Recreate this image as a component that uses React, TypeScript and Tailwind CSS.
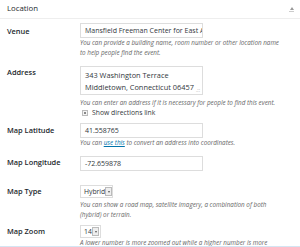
import React from "react";

const Help = ({ children, className = "" }: { children: React.ReactNode; className?: string }) => (
  <p className={`text-[6.3px] leading-[10px] italic text-[#666] whitespace-nowrap ${className}`}>{children}</p>
);

const Label = ({ children, pt }: { children: React.ReactNode; pt: string }) => (
  <div className={`w-[80px] shrink-0 pl-[7px] text-[7.4px] font-semibold text-[#23282d] leading-[10px] ${pt}`}>{children}</div>
);

const Select = ({ value, width }: { value: string; width: string }) => (
  <div className={`flex items-center h-[13px] border border-[#ddd] bg-white ${width}`}>
    <span className="flex-1 pl-[3px] text-[6.8px] text-[#32373c] leading-[11px] whitespace-nowrap">{value}</span>
    <span className="w-[7px] h-[9px] mr-[1px] border border-[#bbb] bg-[#eee] flex items-center justify-center shrink-0">
      <span className="block w-0 h-0 border-l-[1.5px] border-r-[1.5px] border-t-[2px] border-l-transparent border-r-transparent border-t-[#555]" />
    </span>
  </div>
);

const Input = ({ value }: { value: string }) => (
  <div className="w-[123px] h-[15px] border border-[#ddd] bg-white pl-[4px] text-[7px] leading-[13px] text-[#32373c] whitespace-nowrap overflow-hidden">{value}</div>
);

export default function App() {
  return (
    <div className="w-[300px] h-[247px] overflow-hidden bg-white" style={{ fontFamily: "'Open Sans', sans-serif" }}>
      <div className="h-[247px] border-b border-b-[#d4e5f3] overflow-hidden">
        <div className="h-[19px] flex items-center justify-between pl-[7px] pr-[6px] border-b border-[#eee]">
          <span className="text-[7.8px] text-[#23282d]">Location</span>
          <span className="flex flex-col items-center">
            <span className="block w-0 h-0 border-l-[2px] border-r-[2px] border-b-[3px] border-l-transparent border-r-transparent border-b-[#999]" />
            <span className="block w-[5px] h-px bg-[#ccc] mt-px" />
          </span>
        </div>

        {/* Venue */}
        <div className="flex pt-[4px]">
          <Label pt="pt-[3px]">Venue</Label>
          <div className="flex-1">
            <Input value="Mansfield Freeman Center for East A" />
            <Help>You can provide a building name, room number or other location name<br />to help people find the event.</Help>
          </div>
        </div>

        {/* Address */}
        <div className="flex pt-[8px]">
          <Label pt="pt-[1px]">Address</Label>
          <div className="flex-1">
            <div className="relative w-[123px] h-[29px] border border-[#ddd] pl-[4px] pt-[2px] text-[7.4px] leading-[12px] text-[#32373c] whitespace-nowrap">
              343 Washington Terrace<br />Middletown, Connecticut 06457
              <span className="absolute right-[2px] bottom-[1px] text-[5px] leading-none text-[#aaa]">.::</span>
            </div>
            <Help className="mt-[3px]">You can enter an address if it is necessary for people to find this event.</Help>
            <div className="flex items-center h-[10px] pl-[2px]">
              <span className="w-[6px] h-[6px] border border-[#bbb] bg-[#f4f4f4] flex items-center justify-center">
                <span className="w-[2px] h-[2px] bg-[#888]" />
              </span>
              <span className="ml-[4px] text-[6.8px] text-[#32373c] leading-[10px]">Show directions link</span>
            </div>
          </div>
        </div>

        {/* Map Latitude */}
        <div className="flex pt-[5px]">
          <Label pt="pt-[2px]">Map Latitude</Label>
          <div className="flex-1">
            <Input value="41.558765" />
            <Help>You can <span className="text-[#0073aa] underline">use this</span> to convert an address into coordinates.</Help>
          </div>
        </div>

        {/* Map Longitude */}
        <div className="flex pt-[8px]">
          <Label pt="pt-[1px]">Map Longitude</Label>
          <div className="flex-1">
            <Input value="-72.659878" />
          </div>
        </div>

        {/* Map Type */}
        <div className="flex pt-[14px]">
          <Label pt="pt-[1px]">Map Type</Label>
          <div className="flex-1">
            <Select value="Hybrid" width="w-[33px]" />
            <Help className="mt-[2px]">You can show a road map, satellite imagery, a combination of both<br />(hybrid) or terrain.</Help>
          </div>
        </div>

        {/* Map Zoom */}
        <div className="flex pt-[5px]">
          <Label pt="pt-[1px]">Map Zoom</Label>
          <div className="flex-1">
            <Select value="14" width="w-[21px]" />
            <Help>A lower number is more zoomed out while a higher number is more</Help>
          </div>
        </div>
      </div>
    </div>
  );
}
